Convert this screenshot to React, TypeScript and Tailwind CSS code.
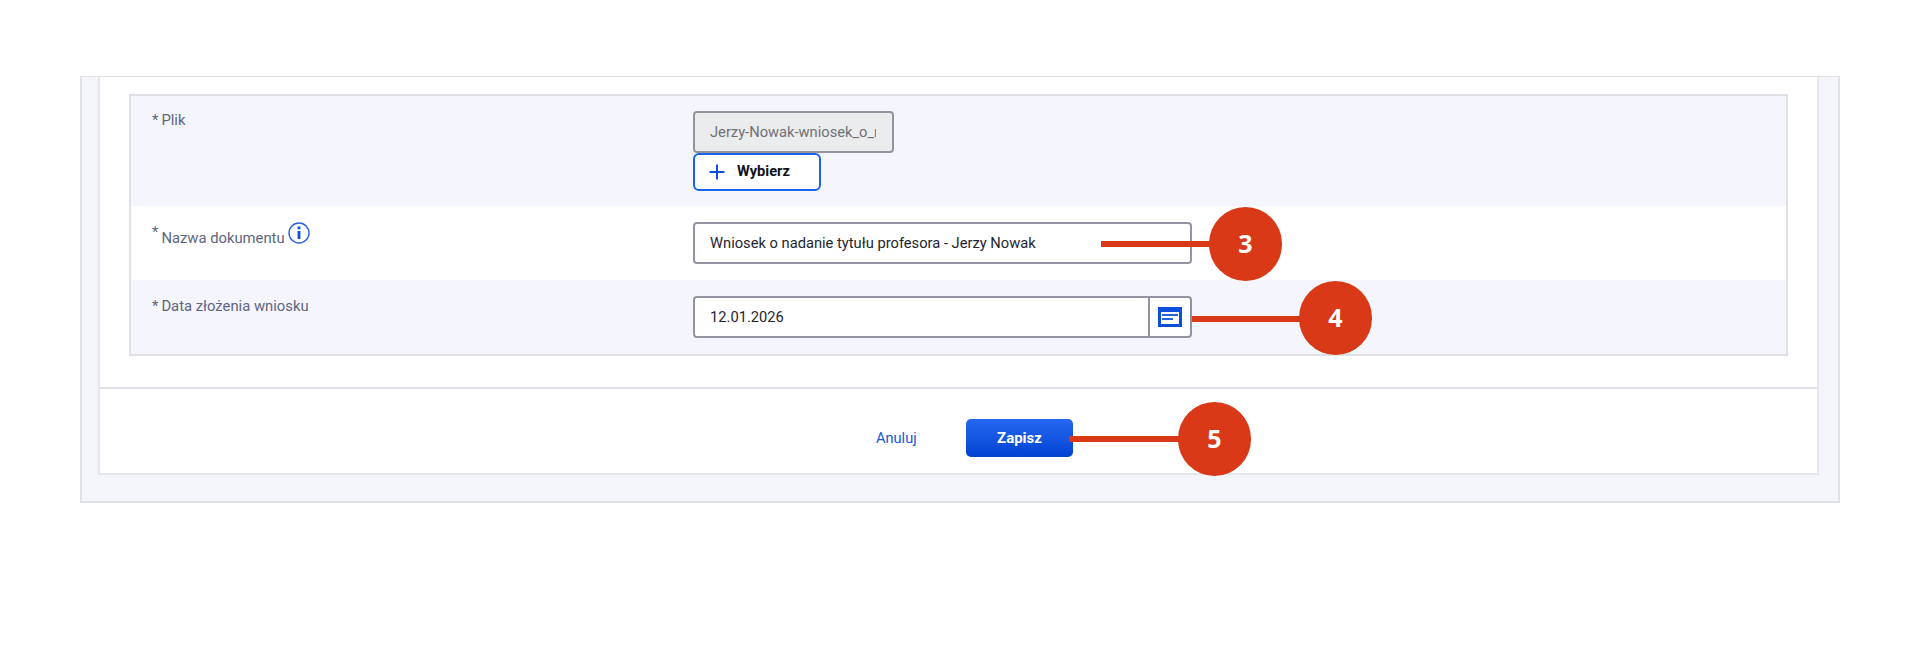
const labelClass = 'text-[14.8px] leading-[20px] text-[#5f6580]';
const inputClass = 'rounded-[4px] border-2 border-[#93949f] text-[14.7px]';

const Star = () => <span className="mr-[3px] text-[#5f6580]">*</span>;

const Callout = ({ n, className, lineClass }: { n: string; className: string; lineClass: string }) => (
  <div className={`absolute h-[74px] w-[73px] ${className}`}>
    <div className={`absolute h-[6px] w-[120px] bg-[#d93917] ${lineClass}`} />
    <div className="absolute inset-0 flex items-center justify-center rounded-full bg-[#d93917] text-[25px] font-bold text-white font-['Open_Sans',sans-serif]">
      {n}
    </div>
  </div>
);

const CalendarIcon = () => (
  <svg width="24" height="20" viewBox="0 0 24 20" fill="none">
    <rect x="1.5" y="1.5" width="21" height="17" fill="#fff" stroke="#0b4fdc" strokeWidth="3" />
    <rect x="1" y="1" width="22" height="4" fill="#0b4fdc" />
    <rect x="4" y="7" width="16" height="2" fill="#2a62dc" />
    <rect x="4" y="11" width="11" height="2" fill="#2a62dc" />
  </svg>
);

const PlusIcon = () => (
  <svg width="16" height="16" viewBox="0 0 16 16" fill="none">
    <path d="M8 0.5V15.5M0.5 8H15.5" stroke="#0b4fdc" strokeWidth="2" />
  </svg>
);

const InfoIcon = () => (
  <svg width="22" height="22" viewBox="0 0 22 22" fill="none" className="ml-[3px] mt-[16px]">
    <circle cx="11" cy="11" r="10" stroke="#2a62dc" strokeWidth="1.4" />
    <rect x="9.6" y="4.5" width="2.8" height="2.8" fill="#0b4fdc" />
    <rect x="9.6" y="9" width="2.8" height="8" fill="#0b4fdc" />
  </svg>
);

export default function App() {
  return (
    <div className="relative h-[655px] w-full overflow-hidden bg-white pt-[76px] pl-[80px] font-['Roboto',sans-serif]">
      <div className="h-[427px] w-[1760px] border-2 border-t border-[#e0e1e7] bg-[#f4f5fb] px-[16px]">
        <div className="h-[398px] w-[1721px] border-x-2 border-b-2 border-[#e6e7ec] bg-white">
          <div className="h-[312px] border-b-2 border-[#dfe0e5] pt-[17px] pl-[29px] pr-[29px]">
            <div className="h-[262px] border-2 border-[#e0e1e7] bg-[#f4f5fd]">
              <div className="flex h-[110px]">
                <div className="w-[562px] pl-[21px] pt-[14px]">
                  <p className={labelClass}><Star />Plik</p>
                </div>
                <div className="flex flex-col pt-[15px]">
                  <div className={`flex h-[42px] w-[201px] items-center overflow-hidden bg-[#ebecee] pl-[15px] pr-[16px] ${inputClass}`}>
                    <span className="overflow-hidden whitespace-nowrap text-[#6f7074]">Jerzy-Nowak-wniosek_o_nadanie</span>
                  </div>
                  <button className="flex h-[38px] w-[128px] items-center rounded-[6px] border-2 border-[#1a62e6] bg-white pb-[1px] pl-[14px]">
                    <PlusIcon />
                    <span className="ml-[12px] text-[14.6px] font-bold text-[#10131c]">Wybierz</span>
                  </button>
                </div>
              </div>
              <div className="flex h-[74px] bg-white">
                <div className="flex w-[562px] items-start pl-[21px]">
                  <span className={`${labelClass} mr-[3px] pt-[16px]`}>*</span>
                  <p className={`${labelClass} pt-[22px]`}>Nazwa dokumentu</p>
                  <InfoIcon />
                </div>
                <div className="pt-[16px]">
                  <div className={`flex h-[42px] w-[499px] items-center bg-white pl-[15px] text-[#23252d] ${inputClass}`}>
                    Wniosek o nadanie tytułu profesora - Jerzy Nowak
                  </div>
                </div>
              </div>
              <div className="flex h-[74px]">
                <div className="w-[562px] pl-[21px] pt-[16px]">
                  <p className={labelClass}><Star />Data złożenia wniosku</p>
                </div>
                <div className="pt-[16px]">
                  <div className={`flex h-[42px] w-[499px] items-center bg-white text-[#23252d] ${inputClass}`}>
                    <span className="flex-1 pl-[15px]">12.01.2026</span>
                    <div className="flex h-full w-[42px] items-center justify-center border-l-2 border-[#93949f]">
                      <CalendarIcon />
                    </div>
                  </div>
                </div>
              </div>
            </div>
          </div>
          <div className="flex h-[84px] items-start pl-[776px] pt-[30px]">
            <a className="mt-[9px] w-[90px] text-[14.6px] leading-[20px] text-[#1a56d6]">Anuluj</a>
            <button className="h-[38px] w-[107px] rounded-[5px] bg-gradient-to-b from-[#2567ef] to-[#0342d4] text-[15px] font-bold text-white">
              Zapisz
            </button>
          </div>
        </div>
      </div>
      <Callout n="3" className="left-[1209px] top-[207px]" lineClass="left-[-108px] top-[34px]" />
      <Callout n="4" className="left-[1299px] top-[281px]" lineClass="left-[-107px] top-[35px]" />
      <Callout n="5" className="left-[1178px] top-[402px]" lineClass="left-[-109px] top-[34px]" />
    </div>
  );
}
